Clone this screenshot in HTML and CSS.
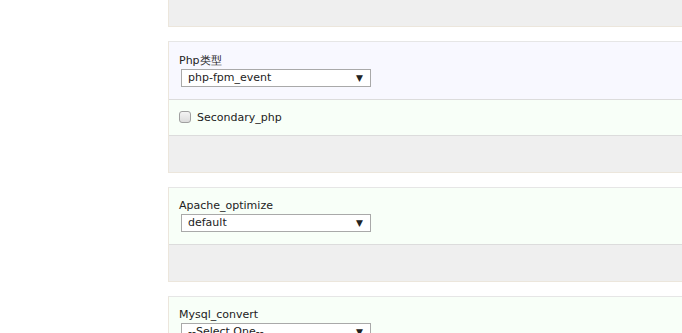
FILE: index.html
```html
<!DOCTYPE html>
<html lang="zh">
<head>
  <meta charset="UTF-8" />
  <meta name="viewport" content="width=device-width, initial-scale=1.0" />
  <title>安装选项</title>
  <link rel="stylesheet" href="styles.css">
</head>
<body>
  <div id="options">
    <div class="group">
      <div class="foot"></div>
    </div>

    <div class="group">
      <div class="row lav">
        <label class="title">Php类型</label>
        <div class="pick"><span>php-fpm_event</span><i>▼</i></div>
      </div>
      <div class="row green check">
        <span class="box"></span>
        <span>Secondary_php</span>
      </div>
      <div class="foot"></div>
    </div>

    <div class="group">
      <div class="row green">
        <label class="title">Apache_optimize</label>
        <div class="pick"><span>default</span><i>▼</i></div>
      </div>
      <div class="foot"></div>
    </div>

    <div class="group">
      <div class="row green">
        <label class="title">Mysql_convert</label>
        <div class="pick"><span>--Select One--</span><i>▼</i></div>
      </div>
    </div>
  </div>
</body>
</html>
```

FILE: styles.css
```css
body {
  margin: 0;
  overflow: hidden;
  font-family: "DejaVu Sans", Verdana, sans-serif;
  font-size: 11px;
  color: #222;
  background: #fff;
}
#options {
  margin-left: 168px;
  width: 700px;
}
.group {
  border-left: 1px solid #ece6dc;
  border-top: 1px solid #e6e6e6;
  border-bottom: 1px solid #ece6dc;
  margin-bottom: 14px;
}
.group:first-child {
  border-top: none;
}
.row {
  padding: 10px 10px 12px;
  border-bottom: 1px solid #dcdcdc;
}
.lav {
  background: #f8f8ff;
  padding-top: 11px;
}
.green {
  background: #f8fff8;
}
.foot {
  height: 36px;
  background: #efefef;
}
.group:first-child .foot {
  height: 26px;
}
.title {
  display: block;
  line-height: 15px;
}
.pick {
  margin: 1px 0 0 2px;
  height: 16px;
  border: 1px solid #a9a9a9;
  background: #fff;
  display: flex;
  align-items: center;
  justify-content: space-between;
  padding: 0 7px 0 6px;
  width: 175px;
  line-height: 16px;
}
.pick i {
  font-style: normal;
  font-size: 9px;
}
.check {
  display: flex;
  align-items: center;
  gap: 6px;
  padding: 10px 10px 11px;
  height: 14px;
}
.box {
  width: 10px;
  height: 10px;
  border: 1px solid #a0a0a0;
  border-radius: 3px;
  background: linear-gradient(#f4f4f4, #dcdcdc);
}
```
